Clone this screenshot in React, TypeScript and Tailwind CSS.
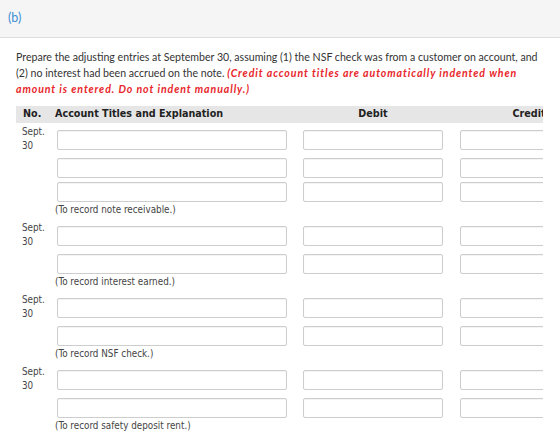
import React from 'react';

interface Entry {
    rows: number;
    note: string;
}

const entries: Entry[] = [
    { rows: 3, note: '(To record note receivable.)' },
    { rows: 2, note: '(To record interest earned.)' },
    { rows: 2, note: '(To record NSF check.)' },
    { rows: 2, note: '(To record safety deposit rent.)' },
];

const tableFont = { fontFamily: '"DejaVu Sans Condensed", "DejaVu Sans", Verdana, sans-serif' };

const Field: React.FC<{ className: string }> = ({ className }) => (
    <input
        type="text"
        className={`h-[20px] border border-[#cdcdcd] rounded-[2px] bg-white shadow-[inset_0_1px_1px_rgba(0,0,0,0.05)] outline-none ${className}`}
    />
);

const EntryBlock: React.FC<{ entry: Entry }> = ({ entry }) => (
    <div>
        {Array.from({ length: entry.rows }).map((_, i) => (
            <div key={i} className={`flex ${i === 0 ? 'h-[28px]' : 'h-[24px]'}`}>
                {/* 날짜 칸 */}
                <div className="w-[39px] shrink-0 pl-[6px] pt-[1px] text-[9.8px] leading-[14px] text-[#444]">
                    {i === 0 && (
                        <>
                            <div>Sept.</div>
                            <div>30</div>
                        </>
                    )}
                </div>
                <div className="w-[240px] shrink-0 pt-[4px] pl-[2px]">
                    <Field className="w-[230px]" />
                </div>
                <div className="w-[156px] shrink-0 pt-[4px] pl-[8px]">
                    <Field className="w-[140px]" />
                </div>
                <div className="w-[156px] shrink-0 pt-[4px] pl-[9px]">
                    <Field className="w-[140px]" />
                </div>
            </div>
        ))}
        <div className="h-[20px] flex items-center pl-[39px] text-[9.8px] text-[#444]">
            {entry.note}
        </div>
    </div>
);

export default function App() {
    return (
        <div className="w-[560px] h-[447px] bg-white overflow-hidden">
            {/* 상단 파트 표시 */}
            <div
                className="h-[38px] bg-[#f5f5f5] border-b border-[#dedede] flex items-center pl-[8px] text-[12.5px] text-[#3d8fd6]"
                style={{ fontFamily: 'Lato, sans-serif' }}
            >
                (b)
            </div>

            <div className="pl-[16px] w-[543px]">
                <p
                    className="mt-[11px] text-[10.6px] leading-[16px] text-[#333]"
                    style={{ fontFamily: 'Lato, sans-serif' }}
                >
                    Prepare the adjusting entries at September 30, assuming (1) the NSF check was from a customer on
                    account, and (2) no interest had been accrued on the note.{' '}
                    <span className="font-bold italic text-[#e8262b] tracking-[0.9px]">
                        (Credit account titles are automatically indented when amount is entered. Do not indent
                        manually.)
                    </span>
                </p>

                <div className="mt-[9px] w-[527px] overflow-hidden" style={tableFont}>
                    <div className="flex h-[17px] items-center bg-[#e6e6e6] text-[10.7px] font-bold text-[#222] whitespace-nowrap">
                        <div className="w-[39px] shrink-0 pl-[7px]">No.</div>
                        <div className="w-[240px] shrink-0">Account Titles and Explanation</div>
                        <div className="w-[156px] shrink-0 text-center">Debit</div>
                        <div className="w-[156px] shrink-0 text-center">Credit</div>
                    </div>
                    <div className="mt-[1px]">
                        {entries.map((entry, idx) => (
                            <EntryBlock key={idx} entry={entry} />
                        ))}
                    </div>
                </div>
            </div>
        </div>
    );
}
